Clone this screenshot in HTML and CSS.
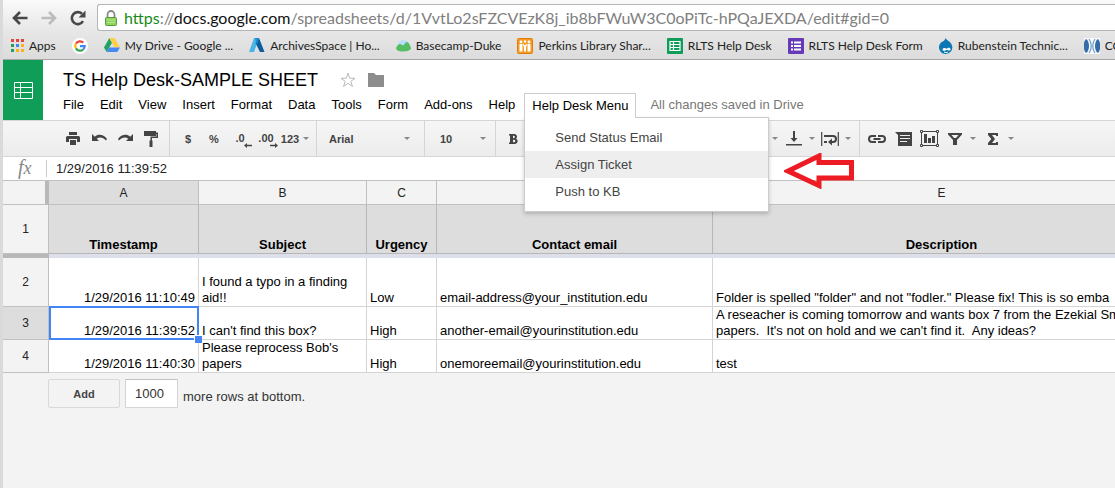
FILE: index.html
```html
<!DOCTYPE html>
<html lang="en">
<head>
<meta charset="utf-8">
<title>TS Help Desk-SAMPLE SHEET</title>
<link rel="stylesheet" href="styles.css">
</head>
<body>
<div class="window">
  <header class="browser">
    <div class="nav">
      <button class="nav-btn" aria-label="Back"><svg width="16" height="14" viewBox="0 0 16 14" fill="none" stroke="#484848" stroke-width="2.6"><path d="M8 1 2 7l6 6M2.500 7H15.500"/></svg></button>
      <button class="nav-btn" aria-label="Forward"><svg width="16" height="14" viewBox="0 0 16 14" fill="none" stroke="#bcbcbc" stroke-width="2.6"><path d="M8 1l6 6-6 6M13.500 7H.5" transform="translate(0 0)"/></svg></button>
      <button class="nav-btn" aria-label="Reload"><svg width="16" height="16" viewBox="0 0 16 16"><path d="M13 11.200A6 6 0 1 1 12 3.800" fill="none" stroke="#484848" stroke-width="2.600"/><path d="M15.500.5v7H8.500z" fill="#484848"/></svg></button>
      <div class="url">
        <svg width="12" height="16" viewBox="0 0 12 16"><path d="M2.500 8V4.500a3.500 3.500 0 0 1 7 0V8" fill="none" stroke="#8a8a8a" stroke-width="1.800"/><rect x=".5" y="7.500" width="11" height="8" rx="1" fill="#8fd35f" stroke="#5b9a3a"/><path d="M2 10h8M2 12.500h8" stroke="#b5e890"/></svg>
        <span class="url-text"><span class="url-scheme">https</span>://<span class="url-host">docs.google.com</span>/spreadsheets/d/1VvtLo2sFZCVEzK8j_ib8bFWuW3C0oPiTc-hPQaJEXDA/edit#gid=0</span>
      </div>
    </div>
    <nav class="bookmarks">
      <a class="bm" href="#"><svg width="13" height="13" viewBox="0 0 13 13"><path fill="#e8433a" d="M0 0h3v3H0zM5 0h3v3H5zM10 0h3v3h-3z"/><path fill="#23a15a" d="M0 5h3v3H0zM0 10h3v3H0z"/><path fill="#4285f4" d="M5 5h3v3H5z"/><path fill="#fbb117" d="M10 5h3v3h-3zM5 10h3v3H5zM10 10h3v3h-3z"/></svg><span>Apps</span></a>
      <a class="bm" href="#" aria-label="Google"><svg width="16" height="16" viewBox="0 0 16 16"><circle cx="8" cy="8" r="8" fill="#fff"/><g fill="none" stroke-width="2.200"><path d="M3.900 5.600A4.800 4.800 0 0 1 11.300 4.600" stroke="#ea4335"/><path d="M3.900 5.600a4.800 4.800 0 0 0 0 4.800" stroke="#fbbc05"/><path d="M3.900 10.400a4.800 4.800 0 0 0 7.300 1.100" stroke="#34a853"/><path d="M11.200 11.500A4.600 4.600 0 0 0 12.700 8.200H8" stroke="#4285f4"/></g></svg></a>
      <a class="bm" href="#"><svg width="16" height="15" viewBox="0 0 16 15"><path fill="#1fa463" d="M5.300 0 8 4.800 2.700 14 0 9.500z"/><path fill="#ffcf48" d="M5.300 0h5.400L16 9.500h-5.400z"/><path fill="#4688f4" d="M5.200 9.500H16L13.300 14H2.700z"/></svg><span>My Drive - Google ...</span></a>
      <a class="bm" href="#"><svg width="16" height="15" viewBox="0 0 16 15"><path fill="#49b4e6" d="M5 0h5L5 14H0z"/><path fill="#0b5c9c" d="M6.500 5 10 0l5.500 14H11z"/><path fill="#1c8fd0" d="M6 0h4L8 7z"/></svg><span>ArchivesSpace | Ho...</span></a>
      <a class="bm" href="#"><svg width="15" height="14" viewBox="0 0 15 14"><path fill="#b9def7" d="M1 9a6.500 8 0 0 1 13 0z"/><path fill="#56bd62" d="M0 9c1-2 2.500-4 4-4s2 1.500 3 1.500S9.500 3 11 3s3.500 4 4 6c.2 2-3 3.500-7.500 3.500S0 11.500 0 9z"/></svg><span>Basecamp-Duke</span></a>
      <a class="bm" href="#"><svg width="16" height="16" viewBox="0 0 16 16"><rect x=".5" y=".5" width="15" height="15" rx="1" fill="#f59b22" stroke="#e27d0b"/><g fill="#fff"><circle cx="4" cy="4" r="1.400"/><circle cx="8" cy="3.500" r="1.200"/><circle cx="12" cy="4" r="1.400"/><path d="M2.500 6h3v7.500h-3zM6 5.500l2 2 2-2V7L9 9v4.500H7V9L6 7zM10.500 6h3v7.500h-3z"/></g></svg><span>Perkins Library Shar...</span></a>
      <a class="bm" href="#"><svg width="16" height="16" viewBox="0 0 16 16"><rect width="16" height="16" rx="1" fill="#0f9d58"/><path d="M3 3.500h10v9H3zM3 6.500h10M3 9.500h10M6.500 3.500v9" fill="none" stroke="#fff" stroke-width="1.200"/></svg><span>RLTS Help Desk</span></a>
      <a class="bm" href="#"><svg width="16" height="16" viewBox="0 0 16 16"><rect width="16" height="16" rx="1" fill="#673ab7"/><path d="M3 4.500h2M6 4.500h7M3 8h2M6 8h7M3 11.500h2M6 11.500h7" stroke="#fff" stroke-width="1.800"/></svg><span>RLTS Help Desk Form</span></a>
      <a class="bm" href="#"><svg width="14" height="16" viewBox="0 0 14 16"><path fill="#0d77b5" d="M6.500 0c1 2 2.500 2.500 4.500 4.200A6.700 6.700 0 1 1 2 4.500C4.500 3 6 2.500 6.500 0z"/><path fill="#fff" d="M3.500 11.500c1-2.500 3-1.500 4-.7 1.300-.8 3.500-2 4 .2.400 2-2.200 2-3.600.8-1.500 1.200-4.500 1.700-4.400-.3z"/><path d="M5 14c1.500.8 3 .8 4 0" stroke="#fff" fill="none"/></svg><span>Rubenstein Technic...</span></a>
      <a class="bm" href="#"><svg width="16" height="16" viewBox="0 0 16 16"><rect width="16" height="16" fill="#f7f9fb"/><path fill="#356ca8" d="M2 1c4 2 4 12 0 14-3-3-3-11 0-14zM14 1c-4 2-4 12 0 14 3-3 3-11 0-14z"/><path d="M5 1c3 4 3 10 0 14M11 1c-3 4-3 10 0 14" fill="none" stroke="#6b9bc8" stroke-width="1.200"/></svg><span>CO</span></a>
    </nav>
  </header>

  <div class="doc-head">
    <a class="logo" href="#" aria-label="Sheets home"><svg width="19" height="17" viewBox="0 0 19 17" fill="none" stroke="#fff"><path d="M.5.5h18v16H.5zM.5 5.500h18M.5 10.500h18M6.500.5v16"/></svg></a>
    <div class="doc-main">
      <div class="title-row">
        <h1 class="title">TS Help Desk-SAMPLE SHEET</h1>
        <button class="icon-btn" aria-label="Star"><svg width="16" height="16" viewBox="0 0 16 16" fill="none" stroke="#bbb"><path d="m8 1 1.700 5.200 5.300.1-4.200 3.100 1.700 5.100L8 11.300l-4.500 3.200 1.700-5.100L1 6.300l5.300-.1z"/></svg></button>
        <button class="icon-btn" aria-label="Move to folder"><svg width="16" height="14" viewBox="0 0 16 14"><path fill="#8d8d8d" d="M0 0h6l2 2h8v12H0z"/></svg></button>
      </div>
      <div class="menubar">
        <button class="menu">File</button><button class="menu">Edit</button><button class="menu">View</button><button class="menu">Insert</button><button class="menu">Format</button><button class="menu">Data</button><button class="menu">Tools</button><button class="menu">Form</button><button class="menu">Add-ons</button><button class="menu">Help</button>
        <div class="menu-wrap">
          <button class="menu menu--open" aria-expanded="true">Help Desk Menu</button>
          <div class="dropdown" role="menu">
            <button class="dropdown-item" role="menuitem">Send Status Email</button>
            <button class="dropdown-item dropdown-item--hover" role="menuitem">Assign Ticket</button>
            <button class="dropdown-item" role="menuitem">Push to KB</button>
            <svg class="pointer" width="70" height="36" viewBox="0 0 70 36"><path d="M67.500 9.500H35V3L4 18l31 14.500V25h32.500z" fill="none" stroke="#ed1c24" stroke-width="5"/></svg>
          </div>
        </div>
        <span class="saved">All changes saved in Drive</span>
      </div>
    </div>
  </div>

  <div class="toolbar">
    <div class="group group--file">
      <button class="tool" aria-label="Print"><svg width="14" height="13" viewBox="0 0 14 13" fill="#444"><path d="M3 0h8v3H3zM1.500 4h11A1.500 1.500 0 0 1 14 5.500V10h-3V7H3v3H0V5.500A1.500 1.500 0 0 1 1.500 4zM4 8h6v5H4z"/></svg></button>
      <button class="tool" aria-label="Undo"><svg width="15" height="9" viewBox="0 0 15 9"><path d="M0 0v7h7L4.700 4.700C7.500 2.500 11 3 14 6.500l1-1.500C11.500.5 6.500-.5 2.800 2.800z" fill="#444"/></svg></button>
      <button class="tool" aria-label="Redo"><svg width="15" height="9" viewBox="0 0 15 9"><path d="M15 0v7H8l2.300-2.300C7.500 2.500 4 3 1 6.500L0 5C3.500.5 8.500-.5 12.200 2.800z" fill="#444"/></svg></button>
      <button class="tool" aria-label="Paint format"><svg width="14" height="16" viewBox="0 0 14 16" fill="#444"><path d="M0 0h12v1.500h2V7H8v2.500h.5V16h-3V9.500H6.500V5.500h6V3H12v2H0z"/></svg></button>
    </div>
    <div class="group group--number">
      <button class="tool">$</button>
      <button class="tool">%</button>
      <button class="tool tool--arrow" aria-label="Decrease decimals">.0<svg width="8" height="5" viewBox="0 0 8 5"><path d="M0 2.500 3 0v1.800h5v1.400H3V5z" fill="#444"/></svg></button>
      <button class="tool tool--arrow" aria-label="Increase decimals">.00<svg width="8" height="5" viewBox="0 0 8 5"><path d="M8 2.500 5 0v1.800H0v1.400h5V5z" fill="#444"/></svg></button>
      <button class="tool tool--format">123<i class="caret"></i></button>
    </div>
    <div class="group group--font"><button class="picker">Arial<i class="caret"></i></button></div>
    <div class="group group--size"><button class="picker">10<i class="caret"></i></button></div>
    <div class="group group--style">
      <button class="tool" aria-label="Bold"><svg width="9" height="10" viewBox="0 0 9 10"><path fill="#444" fill-rule="evenodd" d="M0 0h5.500a2.700 2.700 0 0 1 1.600 4.700A2.800 2.800 0 0 1 6 10H0V8.500h1v-7H0zM4 1.800V4h.8a1.100 1.100 0 0 0 0-2.200zM4 5.700v2.500h1a1.200 1.200 0 0 0 0-2.500z"/></svg></button>
      <div class="align">
        <i class="caret"></i>
        <button class="tool tool--menu" aria-label="Vertical align"><svg width="16" height="15" viewBox="0 0 16 15" fill="#444"><path d="M0 13h16v1.500H0zM7 0h2v7h2.500L8 11 4.500 7H7z"/></svg><i class="caret"></i></button>
        <button class="tool tool--menu" aria-label="Text wrapping"><svg width="18" height="14" viewBox="0 0 18 14"><path d="M.7 0v14M17.300 0v14" stroke="#444" stroke-width="1.200"/><path d="M3 4h9a3 3 0 0 1 0 6h-2M3 10h3" fill="none" stroke="#444" stroke-width="2"/><path d="M7 10l4-3.500v7z" fill="#444"/></svg><i class="caret"></i></button>
      </div>
    </div>
    <div class="group group--insert">
      <button class="tool" aria-label="Insert link"><svg width="18" height="8" viewBox="0 0 18 8" fill="none" stroke="#444" stroke-width="2"><path d="M8 1H4a3 3 0 0 0 0 6h4M10 1h4a3 3 0 0 1 0 6h-4M5.500 4h7"/></svg></button>
      <button class="tool" aria-label="Insert comment"><svg width="17" height="14" viewBox="0 0 17 14"><path fill="#444" d="M0 0h17v14H3V3z"/><path d="M5 3.500h10M5 6.500h10M5 9.500h7" stroke="#eee"/></svg></button>
      <button class="tool" aria-label="Insert chart"><svg width="19" height="17" viewBox="0 0 19 17"><path d="M1.500 1.500h16v14h-16z" fill="none" stroke="#444"/><path fill="#f2f2f2" stroke="#444" d="M.5.500h2v2h-2zM16.500.5h2v2h-2zM.5 14.500h2v2h-2zM16.500 14.500h2v2h-2z"/><path fill="#444" d="M4 4h3v9H4zM8 8h3v5H8zM12 6h3v7h-3z"/></svg></button>
      <button class="tool tool--menu" aria-label="Filter"><svg width="14" height="12" viewBox="0 0 14 12"><path fill="#444" fill-rule="evenodd" d="M0 0h14v1.500L9 7v5H5V7L0 1.500zM3.500 2 6 5h2l2.500-3z"/></svg><i class="caret"></i></button>
      <button class="tool tool--menu" aria-label="Functions"><svg width="10" height="12" viewBox="0 0 10 12"><path fill="#444" d="M0 0h10v3H8V2H4l3 4-3 4h4V9h2v3H0v-2l3.300-4L0 2z"/></svg><i class="caret"></i></button>
    </div>
  </div>

  <div class="formula">
    <label class="fx" for="fx">f<span>x</span></label>
    <input class="formula-input" id="fx" value="1/29/2016 11:39:52">
  </div>

  <main class="grid">
    <table class="sheet">
      <colgroup><col class="c-num"><col class="c-a"><col class="c-b"><col class="c-c"><col class="c-d"><col class="c-e"></colgroup>
      <thead>
        <tr class="letters"><th class="corner"></th><th class="on">A</th><th>B</th><th>C</th><th></th><th>E</th></tr>
        <tr class="titles"><th class="num">1</th><th>Timestamp</th><th>Subject</th><th>Urgency</th><th>Contact email</th><th>Description</th></tr>
        <tr class="freeze"><td class="freeze-num"></td><td colspan="5"></td></tr>
      </thead>
      <tbody>
        <tr class="row row--tall"><th class="num">2</th><td class="time">1/29/2016 11:10:49</td><td>I found a typo in a finding aid!!</td><td>Low</td><td>email-address@your_institution.edu</td><td class="line">Folder is spelled "folder" and not "fodler." Please fix! This is so emba</td></tr>
        <tr class="row"><th class="num on">3</th><td class="time active">1/29/2016 11:39:52</td><td>I can't find this box?</td><td>High</td><td>another-email@yourinstitution.edu</td><td class="line">A reseacher is coming tomorrow and wants box 7 from the Ezekial Sm
papers.  It's not on hold and we can't find it.  Any ideas?</td></tr>
        <tr class="row"><th class="num">4</th><td class="time">1/29/2016 11:40:30</td><td>Please reprocess Bob's papers</td><td>High</td><td>onemoreemail@yourinstitution.edu</td><td>test</td></tr>
      </tbody>
    </table>
  </main>

  <footer class="add-rows">
    <button class="add">Add</button>
    <input class="count" id="count" value="1000">
    <label for="count">more rows at bottom.</label>
  </footer>
</div>
</body>
</html>
```
FILE: styles.css
```css
* { box-sizing: border-box; }
body {
  margin: 0;
  background: #f3f3f3;
  font: 13px/16px "Liberation Sans", Arial, sans-serif;
  color: #000;
  overflow: hidden;
}
button, input { font: inherit; color: inherit; }
button { padding: 0; border: 0; background: none; }
svg { display: block; flex: none; }

.window { min-height: 100vh; border-left: 3px solid #dadada; overflow: hidden; }

/* browser chrome */
.browser {
  background: linear-gradient(#fafafa, #e6e6e6 55%, #dcdcdc);
  border-bottom: 1px solid #a5a5a5;
  font-family: Lato, sans-serif;
}
.nav { display: flex; align-items: center; padding: 4px 0 1px 2px; }
.nav-btn { width: 29px; height: 26px; display: flex; align-items: center; justify-content: center; }
.url {
  flex: 1;
  display: flex;
  align-items: center;
  gap: 7px;
  height: 27px;
  margin-left: 5px;
  padding-left: 7px;
  background: #fff;
  border: 1px solid #b5b5b5;
  border-right: 0;
  border-radius: 3px 0 0 3px;
  overflow: hidden;
}
.url-text { font-size: 16px; line-height: 24px; color: #808080; white-space: nowrap; }
.url-scheme { color: #1a8a1a; }
.url-host { color: #111; }
.bookmarks { display: flex; align-items: center; gap: 16px; height: 27px; padding-left: 8px; overflow: hidden; }
.bm { display: flex; align-items: center; gap: 5px; font-size: 12px; color: #222; text-decoration: none; white-space: nowrap; }

/* document header */
.doc-head { display: flex; height: 60px; background: #fff; }
.logo { width: 40px; background: #0f9d58; display: flex; align-items: center; justify-content: center; }
.doc-main { display: flex; flex-direction: column; }
.title-row { display: flex; align-items: center; gap: 12px; height: 33px; padding: 7px 0 0 20px; }
.title { margin: 0 10px 0 0; font-size: 18px; line-height: 24px; font-weight: 400; }
.menubar { display: flex; height: 25px; padding-left: 12px; white-space: nowrap; }
.menu { height: 24px; padding: 0 8px; }
.menu-wrap { position: relative; margin-left: 1px; }
.menu--open { position: relative; z-index: 3; height: 25px; padding: 0 7px; background: #fff; border: 1px solid #ccc; border-bottom: 0; }
.dropdown {
  position: absolute;
  z-index: 2;
  top: 24px;
  left: 0;
  width: 245px;
  padding: 6px 0;
  background: #fff;
  border: 1px solid #ccc;
  box-shadow: 0 2px 4px rgba(0, 0, 0, .2);
}
.dropdown-item { display: block; width: 100%; height: 27px; padding-left: 30px; text-align: left; color: #444; }
.dropdown-item--hover { background: #eee; }
.pointer { position: absolute; top: 35px; left: 259px; }
.saved { padding: 4px 0 0 14px; color: #777; }

/* toolbar */
.toolbar {
  display: flex;
  height: 37px;
  border: solid #d5d5d5;
  border-width: 1px 0;
  background: linear-gradient(#f6f6f6, #ececec);
  font-size: 11px;
  font-weight: bold;
  color: #444;
}
.group { display: flex; align-items: center; gap: 2px; flex: none; border-right: 1px solid #d5d5d5; }
.tool { width: 24px; height: 26px; display: flex; align-items: center; justify-content: center; }
.tool--arrow { flex-direction: column; line-height: 10px; padding-top: 4px; }
.tool--arrow svg { align-self: flex-end; }
.tool--format { width: 30px; gap: 4px; }
.tool--menu { width: 36px; display: grid; grid-template-columns: 24px 12px; justify-items: center; }
.caret { flex: none; border: solid transparent; border-width: 3px 3px 0; border-top-color: #888; }
.picker { display: flex; flex: 1; align-items: center; justify-content: space-between; height: 26px; }
.group--file { width: 167px; padding-left: 58px; }
.group--number { width: 147px; padding-left: 6px; }
.group--font { width: 108px; padding: 0 14px 0 12px; }
.group--size { width: 71px; padding: 0 9px 0 15px; }
.group--style { width: 364px; padding: 0 5px; justify-content: space-between; }
.group--insert { flex: 1; border-right: 0; padding-left: 5px; }
.align { display: flex; align-items: center; gap: 0; }
.align > .caret { margin-right: 4px; }

/* formula bar */
.formula { display: flex; align-items: center; height: 24px; background: #fff; border-bottom: 1px solid #c0c0c0; }
.fx {
  width: 44px;
  height: 17px;
  padding-left: 15px;
  border-right: 1px solid #ccc;
  font: italic 20px/14px "Liberation Serif", serif;
  color: #888;
}
.fx span { font-size: 18px; }
.formula-input { flex: 1; border: 0; padding: 0 9px; outline: 0; background: none; color: #222; }

/* sheet */
.grid { overflow: hidden; background: #fff; }
.sheet { width: 1168px; table-layout: fixed; border-collapse: separate; border-spacing: 0; }
.c-num { width: 46px; }
.c-a { width: 150px; }
.c-b { width: 168px; }
.c-c { width: 70px; }
.c-d { width: 276px; }
.c-e { width: 458px; }
.sheet th, .sheet td { padding: 0; border: solid #d4d4d4; border-width: 0 1px 1px 0; }
.letters th { height: 24px; background: #f3f3f3; border-color: #c0c0c0; font-size: 12px; font-weight: 400; color: #222; }
.letters .corner { border-right: 4px solid #b8b8b8; }
.sheet .on { background: #ddd; }
.sheet .num { background: #f3f3f3; border-color: #c0c0c0; font-size: 12px; font-weight: 400; color: #222; vertical-align: middle; }
.sheet .num.on { background: #ddd; }
.titles th { height: 49px; background: #ddd; border-color: #b7b7b7; vertical-align: bottom; }
.sheet .freeze td { height: 4px; border: 0; background: #dde0ea; }
.sheet .freeze .freeze-num { background: #b8b8b8; }
.row td { height: 33px; padding: 0 3px; vertical-align: bottom; }
.row--tall td { height: 49px; }
.row .time { text-align: right; }
.row .line { white-space: pre; }
.sheet .active { position: relative; }
.active::before { content: ""; position: absolute; inset: -1px -1px -1px 0; border: 2px solid #4285f4; }
.active::after { content: ""; position: absolute; right: -4px; bottom: -4px; width: 7px; height: 7px; border: solid #fff; border-width: 1px 0 0 1px; background: #4285f4; }

/* add rows */
.add-rows { display: flex; align-items: center; gap: 5px; padding: 6px 0 0 45px; color: #333; }
.add { width: 72px; height: 29px; border: 1px solid #d8d8d8; border-radius: 2px; background: #f3f3f3; font-size: 11px; font-weight: bold; color: #444; }
.count { width: 53px; height: 29px; padding: 0 9px; border: 1px solid #d5d5d5; border-top-color: #c0c0c0; background: #fff; }
.add-rows label { padding-top: 6px; }
```
